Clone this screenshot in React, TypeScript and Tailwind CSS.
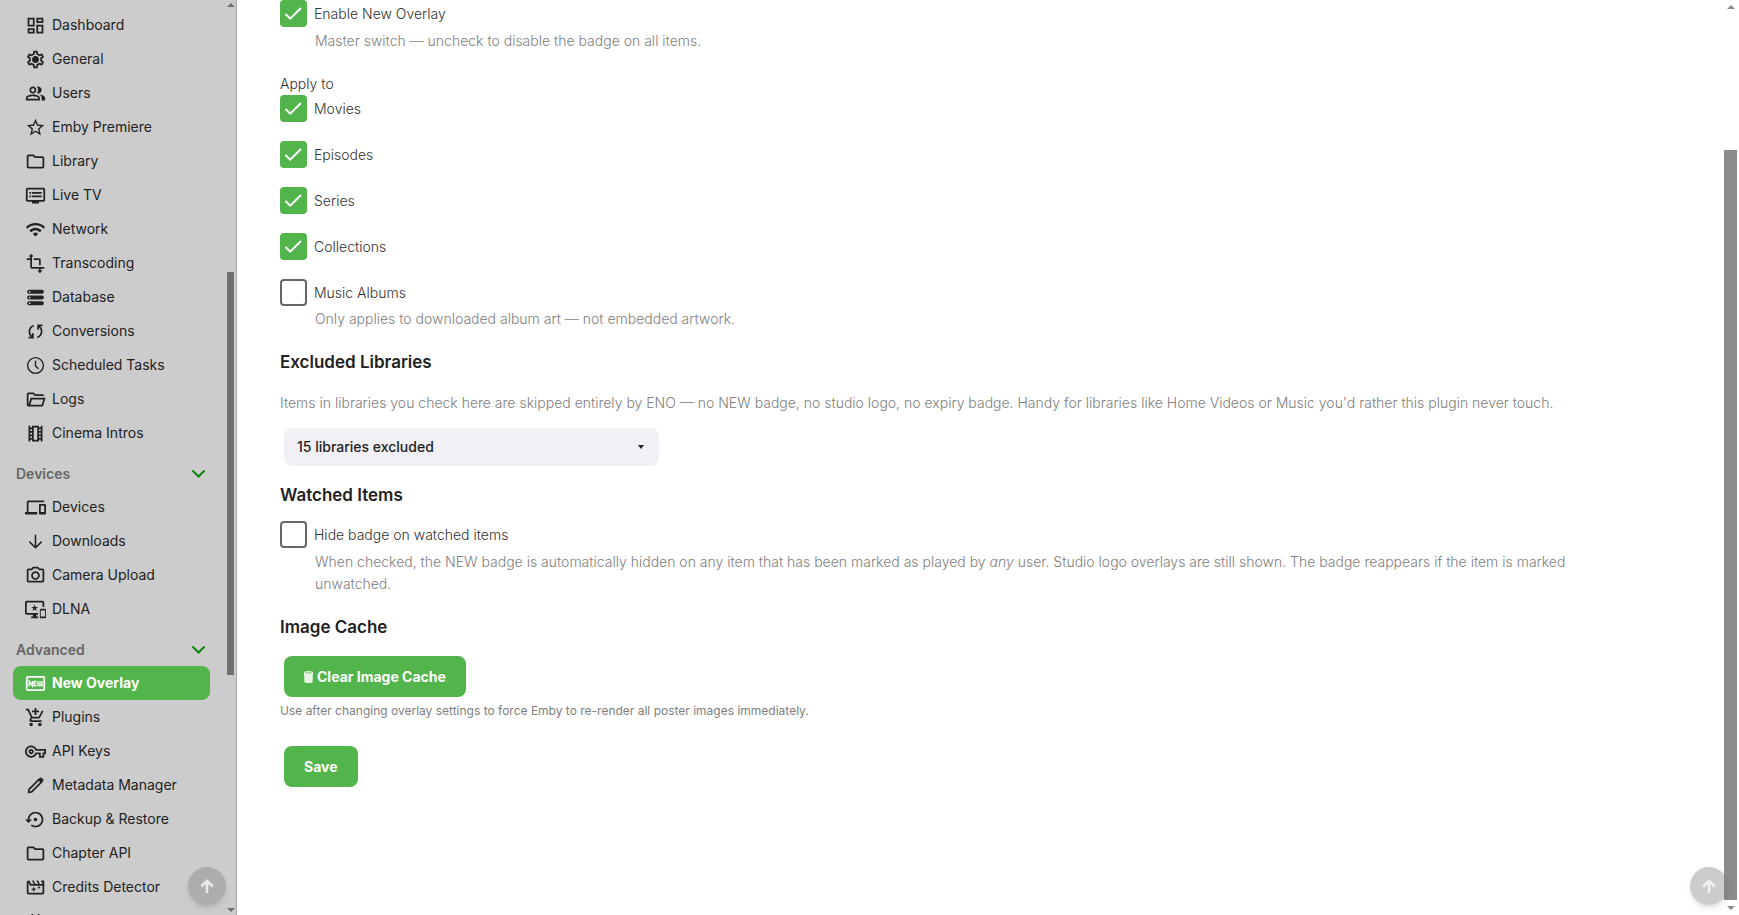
import type { ReactNode } from "react";
import type { IconType } from "react-icons";
import {
  MdAddShoppingCart,
  MdBugReport,
  MdDevices,
  MdOutlineDashboard,
  MdOutlineDvr,
  MdOutlineFolder,
  MdOutlineImportantDevices,
  MdOutlineMovieFilter,
  MdOutlinePhotoCamera,
  MdOutlineSettings,
  MdOutlineTheaters,
  MdOutlineVpnKey,
  MdSettingsBackupRestore,
  MdStarOutline,
  MdTransform,
  MdWifi,
} from "react-icons/md";

const iconSize = "size-[21px] shrink-0";

function Glyph({ d }: { d: string }) {
  return (
    <svg viewBox="0 -960 960 960" className={iconSize} fill="currentColor" aria-hidden="true">
      <path d={d} />
    </svg>
  );
}

function md(Icon: IconType) {
  return <Icon className={iconSize} aria-hidden="true" />;
}

const settings = (
  <svg viewBox="0 0 24 24" className={iconSize} aria-hidden="true">
    <MdOutlineSettings size={24} />
    <circle cx="12" cy="12" r="3.4" fill="currentColor" />
  </svg>
);

const users = (
  <svg viewBox="0 0 24 24" className={iconSize} fill="currentColor" aria-hidden="true">
    <path d="M1 20v-2.8q0-.85.44-1.56t1.16-1.09q1.55-.78 3.15-1.16T9 13t3.25.39 3.15 1.16q.73.38 1.16 1.09T17 17.200V20zm18 0v-3q0-1.100-.61-2.110T16.650 13.150q1.270.15 2.400.51t2.100.89q.9.5 1.380 1.110T23 17v3zM9 12q-1.650 0-2.820-1.180T5 8t1.180-2.820T9 4t2.820 1.180T13 8t-1.180 2.820T9 12m10-4q0 1.650-1.180 2.820T15 12q-.28 0-.7-.06T13.600 11.800q.68-.8 1.040-1.780T15 8t-.36-2.030T13.600 4.200q.35-.13.7-.16T15 4q1.650 0 2.820 1.180T19 8M3 18h12v-.8q0-.28-.14-.5T14.500 16.350q-1.350-.68-2.730-1.010T9 15t-2.770.34T3.500 16.350q-.23.13-.36.350T3 17.200zm6-8q.83 0 1.410-.59T11 8t-.59-1.410T9 6t-1.410.59T7 8t.59 1.410T9 10" />
  </svg>
);

const storage = (
  <svg viewBox="0 0 24 24" className={iconSize} aria-hidden="true">
    <g fill="currentColor">
      <rect x="2.5" y="3.2" width="19" height="4.6" rx="2" />
      <rect x="2.5" y="9.700" width="19" height="4.6" rx="2" />
      <rect x="2.5" y="16.2" width="19" height="4.6" rx="2" />
    </g>
    <g fill="#cccccc">
      <circle cx="5.4" cy="5.5" r="1" />
      <circle cx="5.4" cy="12" r="1" />
      <circle cx="5.4" cy="18.5" r="1" />
    </g>
  </svg>
);

const sync = (
  <Glyph d="M160-160v-80h110l-16-14q-52-46-73-105t-21-119q0-111 66.5-197.5T400-790v84q-72 26-116 88.500T240-478q0 45 17 87.500t53 78.500l10 10v-98h80v240H160Zm400-10v-84q72-26 116-88.500T720-482q0-45-17-87.500T650-648l-10-10v98h-80v-240h240v80H690l16 14q49 49 71.500 106.500T800-482q0 111-66.500 197.500T560-170Z" />
);

const folderOpen = (
  <Glyph d="M160-160q-33 0-56.500-23.500T80-240v-480q0-33 23.500-56.500T160-800h240l80 80h320q33 0 56.500 23.500T880-640H447l-80-80H160v480l96-320h684L837-217q-8 26-29.500 41.500T760-160H160Zm84-80h516l72-240H316l-72 240Z" />
);

const clock = (
  <svg viewBox="0 0 24 24" className={iconSize} fill="none" stroke="currentColor" strokeWidth="1.6" aria-hidden="true">
    <circle cx="12" cy="12" r="9" />
    <path d="M12 7v5.500l3 2.800" strokeLinecap="round" strokeLinejoin="round" />
  </svg>
);

const arrowDown = (
  <svg
    viewBox="0 0 24 24"
    className={iconSize}
    fill="none"
    stroke="currentColor"
    strokeWidth="1.8"
    strokeLinecap="round"
    strokeLinejoin="round"
    aria-hidden="true"
  >
    <path d="M12 5v14M5.500 12.700L12 19.200l6.500-6.500" />
  </svg>
);

const pencil = (
  <svg viewBox="0 0 24 24" className={iconSize} aria-hidden="true">
    <path
      d="M4 20l.6-3.600L16.300 4.700l3 3L7.600 19.400z"
      fill="none"
      stroke="currentColor"
      strokeWidth="2"
      strokeLinejoin="round"
    />
    <path
      d="M15.300 5.700l2-2q.9-.9 1.800 0l1.200 1.200q.9.9 0 1.800l-2 2z"
      fill="currentColor"
      stroke="currentColor"
      strokeLinejoin="round"
    />
  </svg>
);

const fiberNew = (
  <svg viewBox="0 0 24 24" className={iconSize} fill="none" stroke="currentColor" aria-hidden="true">
    <rect x="2" y="4.5" width="20" height="15" rx="1" strokeWidth="2" />
    <path
      d="M4.800 15V9.200L8.500 15V9.200M13 9.600h-2.700v5H13M10.300 12H13M14.800 9v5.500h4.700V9M17.150 9v5"
      strokeWidth="1.5"
    />
  </svg>
);

type Item = { label: string; icon: ReactNode; active?: boolean };

const serverItems: Item[] = [
  { label: "Dashboard", icon: md(MdOutlineDashboard) },
  { label: "General", icon: settings },
  { label: "Users", icon: users },
  { label: "Emby Premiere", icon: md(MdStarOutline) },
  { label: "Library", icon: md(MdOutlineFolder) },
  { label: "Live TV", icon: md(MdOutlineDvr) },
  { label: "Network", icon: md(MdWifi) },
  { label: "Transcoding", icon: md(MdTransform) },
  { label: "Database", icon: storage },
  { label: "Conversions", icon: sync },
  { label: "Scheduled Tasks", icon: clock },
  { label: "Logs", icon: folderOpen },
  { label: "Cinema Intros", icon: md(MdOutlineTheaters) },
];

const deviceItems: Item[] = [
  { label: "Devices", icon: md(MdDevices) },
  { label: "Downloads", icon: arrowDown },
  { label: "Camera Upload", icon: md(MdOutlinePhotoCamera) },
  { label: "DLNA", icon: md(MdOutlineImportantDevices) },
];

const advancedItems: Item[] = [
  { label: "New Overlay", icon: fiberNew, active: true },
  { label: "Plugins", icon: md(MdAddShoppingCart) },
  { label: "API Keys", icon: md(MdOutlineVpnKey) },
  { label: "Metadata Manager", icon: pencil },
  { label: "Backup & Restore", icon: md(MdSettingsBackupRestore) },
  { label: "Chapter API", icon: md(MdOutlineFolder) },
  { label: "Credits Detector", icon: md(MdOutlineMovieFilter) },
  { label: "Diagnostic Suite", icon: md(MdBugReport) },
];

function NavList({ items }: { items: Item[] }) {
  return (
    <ul className="pr-[17px] pl-[13px]">
      {items.map((item) => (
        <li key={item.label}>
          <a
            href="#"
            aria-current={item.active ? "page" : undefined}
            className={
              item.active
                ? "flex h-[34px] items-center gap-1.5 rounded-lg bg-[#52b54b] pl-3 font-bold text-white"
                : "flex h-[34px] items-center gap-1.5 rounded-lg pl-3 text-[#222222]"
            }
          >
            {item.icon}
            {item.label}
          </a>
        </li>
      ))}
    </ul>
  );
}

function NavHeader({ title }: { title: string }) {
  return (
    <button
      type="button"
      className="mt-2 flex h-8 w-full items-center justify-between pr-[22px] pl-4 font-semibold text-[#666666]"
    >
      {title}
      <svg viewBox="0 0 13 8" className="h-2 w-[13px]" fill="none" stroke="#0a8a0a" strokeWidth="2" aria-hidden="true">
        <path d="M1 1l5.500 5.500L12 1" strokeLinecap="round" />
      </svg>
    </button>
  );
}

function ScrollArrow({ down = false, color }: { down?: boolean; color: string }) {
  return (
    <svg viewBox="0 0 8 4" className="h-1 w-2 shrink-0" fill={color} aria-hidden="true">
      <path d={down ? "M0 0h8L4 4z" : "M0 4h8L4 0z"} />
    </svg>
  );
}

function Check({ id, label, checked = false }: { id: string; label: string; checked?: boolean }) {
  return (
    <div className="flex items-center gap-[7px]">
      <span className="relative flex size-[27px]">
        <input
          id={id}
          type="checkbox"
          defaultChecked={checked}
          className="peer size-[27px] appearance-none rounded-sm border-2 border-[#666666] bg-white checked:border-[#52b54b] checked:bg-[#52b54b]"
        />
        <svg
          viewBox="0 0 27 27"
          className="pointer-events-none absolute inset-0 hidden size-full peer-checked:block"
          fill="none"
          stroke="white"
          strokeWidth="2"
          aria-hidden="true"
        >
          <path d="M5.500 14l4.700 4.700L21 8" />
        </svg>
      </span>
      <label htmlFor={id} className="text-[#333333]">
        {label}
      </label>
    </div>
  );
}

function ToTop({ place }: { place: string }) {
  return (
    <button
      type="button"
      aria-label="Back to top"
      className={`${place} flex size-[38px] items-center justify-center rounded-full bg-[#808080]/40 text-white/75 shadow-md`}
    >
      <svg viewBox="0 0 14 14" className="size-3.5" fill="none" stroke="currentColor" strokeWidth="2.6" aria-hidden="true">
        <path d="M7 14V2.500M1.300 7.500L7 1.900l5.700 5.600" />
      </svg>
    </button>
  );
}

const heading = "text-[17px] leading-6 font-semibold text-[#222222]";
const greenButton = "h-[41px] rounded-lg bg-[#52b54b] px-5 font-bold text-white";

export default function App() {
  return (
    <div className="flex h-screen overflow-hidden bg-white font-['Inter',sans-serif] text-sm leading-[22px]">
      <aside className="relative flex w-[237px] shrink-0 overflow-hidden border-r border-[#a8a8a8] bg-[#cccccc]">
        <nav className="-mt-5 w-[227px] shrink-0">
          <h2 className="flex h-7 items-start pl-4 font-semibold text-[#666666]">Emby Server</h2>
          <NavList items={serverItems} />
          <NavHeader title="Devices" />
          <NavList items={deviceItems} />
          <NavHeader title="Advanced" />
          <NavList items={advancedItems} />
        </nav>
        <div className="flex w-[7px] flex-col items-center justify-between py-[3px]" aria-hidden="true">
          <ScrollArrow color="#707070" />
          <div className="flex w-full flex-1 flex-col">
            <div className="grow-[265]" />
            <div className="grow-[403] bg-[#707070]" />
            <div className="grow-[233]" />
          </div>
          <ScrollArrow color="#707070" down />
        </div>
        <ToTop place="absolute right-[10px] bottom-[10px]" />
      </aside>

      <main className="min-w-0 flex-1 pr-[100px] pl-[43px] font-light text-[#808080]">
        <form onSubmit={(e) => e.preventDefault()}>
          <Check id="enable" label="Enable New Overlay" checked />
          <p className="mt-[3px] pl-[35px]">Master switch — uncheck to disable the badge on all items.</p>

          <fieldset className="mt-[21px]">
            <legend className="text-[#333333]">Apply to</legend>
            <div className="flex flex-col gap-[19px]">
              <Check id="movies" label="Movies" checked />
              <Check id="episodes" label="Episodes" checked />
              <Check id="series" label="Series" checked />
              <Check id="collections" label="Collections" checked />
              <Check id="albums" label="Music Albums" />
            </div>
            <p className="mt-0.5 pl-[35px]">Only applies to downloaded album art — not embedded artwork.</p>
          </fieldset>

          <h3 className={`${heading} mt-5`}>Excluded Libraries</h3>
          <p className="mt-[18px]">
            Items in libraries you check here are skipped entirely by ENO — no NEW badge, no studio logo, no expiry
            badge. Handy for libraries like Home Videos or Music you'd rather this plugin never touch.
          </p>
          <div className="relative mt-[14px] ml-1 w-[375px]">
            <select
              aria-label="Excluded libraries"
              className="h-[38px] w-full appearance-none rounded-lg bg-[#f1f0f5] pl-[13px] font-medium text-[#222222]"
            >
              <option>15 libraries excluded</option>
            </select>
            <svg
              viewBox="0 0 6 4"
              className="pointer-events-none absolute top-[17px] right-[15px] h-1 w-1.5"
              fill="#222222"
              aria-hidden="true"
            >
              <path d="M0 0h6L3 4z" />
            </svg>
          </div>

          <h3 className={`${heading} mt-[17px]`}>Watched Items</h3>
          <div className="mt-[14px]">
            <Check id="watched" label="Hide badge on watched items" />
          </div>
          <p className="mt-[3px] pl-[35px]">
            When checked, the NEW badge is automatically hidden on any item that has been marked as played by{" "}
            <em>any</em> user. Studio logo overlays are still shown. The badge reappears if the item is marked
            unwatched.
          </p>

          <h3 className={`${heading} mt-5`}>Image Cache</h3>
          <button type="button" className={`${greenButton} mt-[17px] ml-1 flex items-center gap-1`}>
            <svg viewBox="0 0 9 12" className="h-3 w-[9px]" fill="currentColor" aria-hidden="true">
              <path d="M0 1.500Q0 0 4.500 0T9 1.500L8.600 11Q8.300 12 4.500 12T.4 11z" opacity=".85" />
              <path d="M1.500 1.800h6" stroke="#52b54b" strokeWidth=".7" />
            </svg>
            Clear Image Cache
          </button>
          <p className="mt-[3px] text-xs leading-[22px] font-normal">
            Use after changing overlay settings to force Emby to re-render all poster images immediately.
          </p>
          <button type="submit" className={`${greenButton} mt-6 ml-1`}>
            Save
          </button>
        </form>
      </main>

      <div className="relative flex w-[15px] shrink-0 flex-col items-center py-[5px] pr-0.5" aria-hidden="true">
        <ScrollArrow color="#8b8b8b" />
        <div className="flex w-full flex-1 flex-col">
          <div className="grow-[141]" />
          <div className="grow-[750] bg-[#8b8b8b]" />
          <div className="grow-[6]" />
        </div>
        <ScrollArrow color="#8b8b8b" down />
      </div>
      <ToTop place="absolute right-[11px] bottom-[10px]" />
    </div>
  );
}
